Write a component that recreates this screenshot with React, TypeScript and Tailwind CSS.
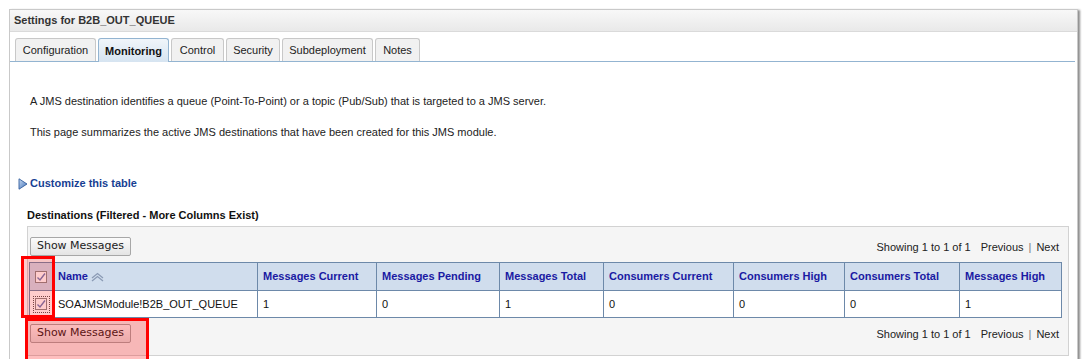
import React from "react";

const tabs = [
  { label: "Configuration", w: "w-[81px]" },
  { label: "Monitoring", w: "w-[71px]", active: true },
  { label: "Control", w: "w-[53px]" },
  { label: "Security", w: "w-[54px]" },
  { label: "Subdeployment", w: "w-[91px]" },
  { label: "Notes", w: "w-[45px]" },
];

const cols = [
  { h: "", w: 23 },
  { h: "Name", w: 205 },
  { h: "Messages Current", w: 119 },
  { h: "Messages Pending", w: 123 },
  { h: "Messages Total", w: 104 },
  { h: "Consumers Current", w: 130 },
  { h: "Consumers High", w: 111 },
  { h: "Consumers Total", w: 115 },
  { h: "Messages High", w: 102 },
];

const row = ["SOAJMSModule!B2B_OUT_QUEUE", "1", "0", "1", "0", "0", "0", "1"];

function Check({ focus }: { focus?: boolean }) {
  return (
    <div className={`flex h-[17px] w-[17px] items-center justify-center ${focus ? "border border-dotted border-[#555]" : ""}`}>
      <div className="flex h-[12px] w-[12px] items-center justify-center border border-[#8a8a8a] bg-white">
        <svg width="10" height="10" viewBox="0 0 10 10">
          <path d="M1.5 5.5 L4 8 L9 1.5" fill="none" stroke="#6d7fb8" strokeWidth="1.4" />
        </svg>
      </div>
    </div>
  );
}

function Btn() {
  return (
    <div
      className="flex h-[19px] w-[101px] items-center justify-center rounded-[2px] border border-[#a7a7a7] bg-gradient-to-b from-[#fbfbfb] to-[#e4e4e4] text-[11px] text-[#222]"
      style={{ fontFamily: '"DejaVu Sans", sans-serif' }}
    >
      Show Messages
    </div>
  );
}

function Pager() {
  return (
    <div className="flex items-center pt-[2px] text-[11px] text-[#222]">
      <span>Showing 1 to 1 of 1</span>
      <span className="ml-[10px]">Previous</span>
      <span className="mx-[5px] text-[#777]">|</span>
      <span>Next</span>
    </div>
  );
}

export default function App() {
  return (
    <div
      className="relative h-[359px] w-[1083px] overflow-hidden bg-white"
      style={{ fontFamily: '"Liberation Sans", Arial, sans-serif' }}
    >
      <div className="ml-[9px] mt-[9px] h-[400px] w-[1069px] border border-[#c9c9c9] bg-white shadow-[2px_1px_2px_rgba(0,0,0,0.45)]">
        <div className="flex h-[22px] items-center border-b border-[#dadada] bg-gradient-to-b from-[#f8f8f8] to-[#e9e9e9] pl-[4px] text-[11px] font-bold text-[#333]">
          Settings for B2B_OUT_QUEUE
        </div>
        <div className="mr-[2px] mt-[6px] flex gap-[2px] border-b border-[#93b4d1] pl-[5px]">
          {tabs.map((t) =>
            t.active ? (
              <div
                key={t.label}
                className={`${t.w} -mb-px flex h-[24px] items-center justify-center rounded-t-[3px] border border-b-0 border-[#93b4d1] bg-gradient-to-b from-[#f0f5fa] to-[#d6e4f1] pt-[1px] text-[11px] font-bold text-[#111]`}
              >
                {t.label}
              </div>
            ) : (
              <div
                key={t.label}
                className={`${t.w} flex h-[23px] items-center justify-center rounded-t-[3px] border border-b-0 border-[#c8c8c8] bg-[#f1f1f1] pt-[1px] text-[11px] text-[#222]`}
              >
                {t.label}
              </div>
            )
          )}
        </div>
        <div className="pl-[20px] text-[11px] text-[#222]">
          <p className="mt-[33px] leading-[13px]">
            A JMS destination identifies a queue (Point-To-Point) or a topic (Pub/Sub) that is targeted to a JMS server.
          </p>
          <p className="mt-[18px] leading-[13px]">
            This page summarizes the active JMS destinations that have been created for this JMS module.
          </p>
          <div className="-ml-[12px] mt-[38px] flex items-center leading-[13px]">
            <svg width="10" height="12" viewBox="0 0 10 12" className="mr-[2px]">
              <defs>
                <linearGradient id="tg" x1="0" y1="0" x2="1" y2="1">
                  <stop offset="0" stopColor="#c9dcf2" />
                  <stop offset="1" stopColor="#3e6fb8" />
                </linearGradient>
              </defs>
              <path d="M1 0.8 L9 6 L1 11.2 Z" fill="url(#tg)" stroke="#345f9e" strokeWidth="0.9" />
            </svg>
            <span className="font-bold text-[#173f93]">Customize this table</span>
          </div>
          <div className="-ml-[3px] mt-[19px] font-bold leading-[13px] text-[#111]">
            Destinations (Filtered - More Columns Exist)
          </div>
          <div className="-ml-[3px] mr-[8px] mt-[4px] border border-[#d2d2d2] bg-[#f5f5f5] pb-[12px] pl-[1px] pr-[9px] pt-[10px]">
            <div className="flex items-center justify-between">
              <div className="pl-[1px]">
                <Btn />
              </div>
              <Pager />
            </div>
            <table className="mt-[6px] table-fixed border-collapse" style={{ width: 1033 }}>
              <colgroup>
                {cols.map((c, i) => (
                  <col key={i} style={{ width: c.w }} />
                ))}
              </colgroup>
              <thead>
                <tr className="h-[28px] bg-[#d0dded]">
                  {cols.map((c, i) => (
                    <th
                      key={i}
                      className="border border-[#6d89a9] px-[5px] text-left text-[11px] font-bold text-[#1a1aa3]"
                    >
                      {i === 0 ? (
                        <div className="flex justify-center">
                          <Check />
                        </div>
                      ) : i === 1 ? (
                        <span className="flex items-center">
                          Name
                          <svg width="15" height="10" viewBox="0 0 15 10" className="ml-[2px]">
                            <path d="M2 6 L7.5 1.5 L13 6" fill="none" stroke="#8b9bb5" strokeWidth="1.3" />
                            <path d="M2 9 L7.5 4.5 L13 9" fill="none" stroke="#8b9bb5" strokeWidth="1.3" />
                          </svg>
                        </span>
                      ) : (
                        c.h
                      )}
                    </th>
                  ))}
                </tr>
              </thead>
              <tbody>
                <tr className="h-[27px] bg-white">
                  <td className="border border-[#6d89a9]">
                    <div className="flex justify-center">
                      <Check focus />
                    </div>
                  </td>
                  {row.map((v, i) => (
                    <td key={i} className="border border-[#6d89a9] px-[5px] text-[11px] text-[#111]">
                      {v}
                    </td>
                  ))}
                </tr>
              </tbody>
            </table>
            <div className="mt-[6px] flex items-center justify-between">
              <div className="pl-[1px]">
                <Btn />
              </div>
              <Pager />
            </div>
          </div>
        </div>
      </div>
      <div className="absolute left-[21px] top-[256px] h-[62px] w-[34px] border-[3px] border-[#ff0000] bg-[rgba(255,0,0,0.2)]" />
      <div className="absolute left-[25px] top-[318px] h-[45px] w-[124px] border-[3px] border-[#ff0000] bg-[rgba(255,0,0,0.25)]" />
    </div>
  );
}
